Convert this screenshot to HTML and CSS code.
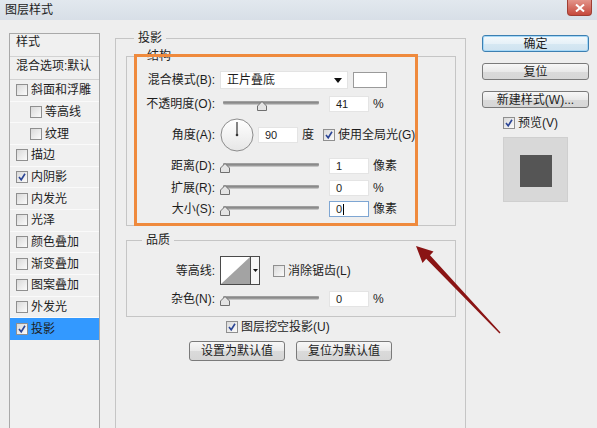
FILE: index.html
```html
<!DOCTYPE html>
<html lang="zh-CN">
<head>
<meta charset="utf-8">
<title>图层样式</title>
<link rel="stylesheet" href="styles.css">
</head>
<body>
<div class="titlebar">
  <span class="title">图层样式</span>
  <span class="close"><svg width="10" height="8" viewBox="0 0 10 8"><path d="M1 0.5 L9 7.5 M9 0.5 L1 7.5" stroke="#fff" stroke-width="2"/></svg></span>
</div>
<div class="main">
  <div class="list">
    <div class="list-head">样式</div>
    <div class="list-blend">混合选项:默认</div>
    <div class="item"><span class="cb"></span><span class="itxt">斜面和浮雕</span></div>
    <div class="item sub"><span class="cb"></span><span class="itxt">等高线</span></div>
    <div class="item sub"><span class="cb"></span><span class="itxt">纹理</span></div>
    <div class="item"><span class="cb"></span><span class="itxt">描边</span></div>
    <div class="item"><span class="cb"><svg class="tick" viewBox="0 0 10 10"><path d="M2 5 L4.2 7.8 L8 1.8" /></svg></span><span class="itxt">内阴影</span></div>
    <div class="item"><span class="cb"></span><span class="itxt">内发光</span></div>
    <div class="item"><span class="cb"></span><span class="itxt">光泽</span></div>
    <div class="item"><span class="cb"></span><span class="itxt">颜色叠加</span></div>
    <div class="item"><span class="cb"></span><span class="itxt">渐变叠加</span></div>
    <div class="item"><span class="cb"></span><span class="itxt">图案叠加</span></div>
    <div class="item"><span class="cb"></span><span class="itxt">外发光</span></div>
    <div class="item selected"><span class="cb"><svg class="tick" viewBox="0 0 10 10"><path d="M2 5 L4.2 7.8 L8 1.8" /></svg></span><span class="itxt">投影</span></div>
  </div>

  <fieldset class="fs-outer">
    <legend class="lg-outer">投影</legend>
    <fieldset class="fs-struct">
      <legend class="lg-struct">结构</legend>
      <div class="row r1">
        <span class="lbl">混合模式(B):</span>
        <span class="select"><span class="sel-text">正片叠底</span><svg class="sel-arrow" width="8" height="5" viewBox="0 0 8 5"><path d="M0 0 H8 L4 5 Z" fill="#111"/></svg></span>
        <span class="swatch"></span>
      </div>
      <div class="row r2">
        <span class="lbl">不透明度(O):</span>
        <svg class="slider" width="100" height="12" viewBox="0 0 100 12"><rect x="3" y="1.5" width="96" height="3" rx="1.5" fill="#9a9a9a"/><rect x="3" y="1.5" width="96" height="1" fill="#7a7a7a"/><path d="M37.5 10.5 V6 L42 1.5 L46.5 6 V10.5 Z" fill="#e4e4e4" stroke="#6f6f6f"/></svg>
        <span class="num">41</span>
        <span class="unit">%</span>
      </div>
      <div class="row r3">
        <span class="lbl">角度(A):</span>
        <svg class="dial" width="34" height="34" viewBox="0 0 34 34"><defs><linearGradient id="dg" x1="0" y1="0" x2="0" y2="1"><stop offset="0" stop-color="#ffffff"/><stop offset="1" stop-color="#e6e6e6"/></linearGradient></defs><circle cx="17" cy="17" r="16" fill="url(#dg)" stroke="#8c8c8c"/><path d="M17 17 V4" stroke="#333" stroke-width="1.2"/><circle cx="17" cy="17" r="1.3" fill="#333"/></svg>
        <span class="num num-dial">90</span>
        <span class="unit">度</span>
        <span class="cb cb-global"><svg class="tick" viewBox="0 0 10 10"><path d="M2 5 L4.2 7.8 L8 1.8" /></svg></span>
        <span class="cbtxt">使用全局光(G)</span>
      </div>
      <div class="row r4">
        <span class="lbl">距离(D):</span>
        <svg class="slider" width="100" height="12" viewBox="0 0 100 12"><rect x="3" y="1.5" width="96" height="3" rx="1.5" fill="#9a9a9a"/><rect x="3" y="1.5" width="96" height="1" fill="#7a7a7a"/><path d="M0.5 10.5 V6 L5 1.5 L9.5 6 V10.5 Z" fill="#e4e4e4" stroke="#6f6f6f"/></svg>
        <span class="num">1</span>
        <span class="unit">像素</span>
      </div>
      <div class="row r5">
        <span class="lbl">扩展(R):</span>
        <svg class="slider" width="100" height="12" viewBox="0 0 100 12"><rect x="3" y="1.5" width="96" height="3" rx="1.5" fill="#9a9a9a"/><rect x="3" y="1.5" width="96" height="1" fill="#7a7a7a"/><path d="M0.5 10.5 V6 L5 1.5 L9.5 6 V10.5 Z" fill="#e4e4e4" stroke="#6f6f6f"/></svg>
        <span class="num">0</span>
        <span class="unit">%</span>
      </div>
      <div class="row r6">
        <span class="lbl">大小(S):</span>
        <svg class="slider" width="100" height="12" viewBox="0 0 100 12"><rect x="3" y="1.5" width="96" height="3" rx="1.5" fill="#9a9a9a"/><rect x="3" y="1.5" width="96" height="1" fill="#7a7a7a"/><path d="M0.5 10.5 V6 L5 1.5 L9.5 6 V10.5 Z" fill="#e4e4e4" stroke="#6f6f6f"/></svg>
        <span class="num focus">0<span class="caret"></span></span>
        <span class="unit">像素</span>
      </div>
    </fieldset>

    <fieldset class="fs-quality">
      <legend class="lg-quality">品质</legend>
      <div class="row q1">
        <span class="lbl">等高线:</span>
        <span class="contour">
          <svg class="contour-img" width="29" height="27" viewBox="0 0 29 27"><rect width="29" height="27" fill="#fff"/><path d="M0 27 L29 0 V27 Z" fill="#a3a3a3"/></svg>
          <span class="contour-drop"><svg width="5" height="3" viewBox="0 0 5 3"><path d="M0 0 H5 L2.5 3 Z" fill="#111"/></svg></span>
        </span>
        <span class="cb cb-aa"></span>
        <span class="cbtxt">消除锯齿(L)</span>
      </div>
      <div class="row q2">
        <span class="lbl">杂色(N):</span>
        <svg class="slider" width="100" height="12" viewBox="0 0 100 12"><rect x="3" y="1.5" width="96" height="3" rx="1.5" fill="#9a9a9a"/><rect x="3" y="1.5" width="96" height="1" fill="#7a7a7a"/><path d="M0.5 10.5 V6 L5 1.5 L9.5 6 V10.5 Z" fill="#e4e4e4" stroke="#6f6f6f"/></svg>
        <span class="num">0</span>
        <span class="unit">%</span>
      </div>
    </fieldset>

    <div class="knock">
      <span class="cb"><svg class="tick" viewBox="0 0 10 10"><path d="M2 5 L4.2 7.8 L8 1.8" /></svg></span>
      <span class="cbtxt">图层挖空投影(U)</span>
    </div>
    <div class="defaults">
      <span class="btn btn-def">设置为默认值</span>
      <span class="btn btn-def">复位为默认值</span>
    </div>
  </fieldset>

  <div class="side">
    <div class="side-btns">
      <span class="btn btn-side primary">确定</span>
      <span class="btn btn-side">复位</span>
      <span class="btn btn-side">新建样式(W)...</span>
    </div>
    <div class="preview-toggle">
      <span class="cb"><svg class="tick" viewBox="0 0 10 10"><path d="M2 5 L4.2 7.8 L8 1.8" /></svg></span>
      <span class="cbtxt">预览(V)</span>
    </div>
    <div class="preview-box"><div class="preview-square"></div></div>
  </div>
</div>

<div class="highlight"></div>
<svg class="arrow" width="597" height="428" viewBox="0 0 597 428">
  <path d="M416 246 L433.5 251.5 L430 255.2 L500.5 332.6 L499.5 333.4 L426.2 258.8 L422.5 263 Z" fill="#8a1414"/>
</svg>
</body>
</html>
```

FILE: styles.css
```css
* { box-sizing: border-box; }

body {
  margin: 0;
  width: 597px;
  height: 428px;
  overflow: hidden;
  position: relative;
  background: #eeeeee;
  font-family: "Liberation Sans", "Noto Sans CJK SC", sans-serif;
  font-size: 12px;
  line-height: 14px;
  color: #1d1d1d;
}

/* title bar */
.titlebar {
  height: 20px;
  display: flex;
  justify-content: space-between;
  align-items: center;
  padding-left: 5px;
  background: linear-gradient(#e2e8ee, #d8dfe7);
}
.title { color: #222; }
.close {
  align-self: flex-start;
  width: 25px;
  height: 16px;
  margin-right: 5px;
  display: flex;
  align-items: center;
  justify-content: center;
  background: linear-gradient(#e3948a, #c6493c);
  border: 1px solid #9f3e33;
  border-top: none;
  border-radius: 0 0 4px 4px;
}

.main {
  display: flex;
  align-items: flex-start;
  padding-top: 13px;
}

/* left styles list */
.list {
  margin-left: 9px;
  width: 91px;
  height: 395px;
  border: 1px solid #a9a9a9;
  border-bottom: none;
  background: #f0f0f0;
  flex-shrink: 0;
}
.list-head {
  height: 23px;
  padding: 1px 0 0 6px;
  border-bottom: 1px solid #d2d2d2;
}
.list-blend {
  height: 23px;
  padding: 2px 0 0 6px;
  border-bottom: 1px solid #d2d2d2;
  white-space: nowrap;
}
.item {
  height: 21.67px;
  display: flex;
  align-items: center;
  padding-left: 6px;
  border-bottom: 1px solid #fafafa;
}
.item.sub { padding-left: 20px; }
.item.selected {
  background: #3399ff;
  border-bottom-color: #3399ff;
}
.itxt { margin-left: 3px; }

/* checkbox */
.cb {
  width: 12px;
  height: 12px;
  flex-shrink: 0;
  border: 1px solid #8f8f8f;
  background: linear-gradient(135deg, #d9d9d9, #fbfbfb);
  display: inline-flex;
  align-items: center;
  justify-content: center;
}
.tick { width: 10px; height: 10px; }
.tick path { fill: none; stroke: #2b4596; stroke-width: 1.6; }
.cbtxt { margin-left: 3px; white-space: nowrap; }

/* fieldsets */
fieldset {
  min-width: 0;
  margin: 0;
  padding: 0;
  border: 1px solid #c5c5c5;
}
legend {
  padding: 0 4px;
  line-height: 14px;
  font-size: 12px;
}
.fs-outer {
  margin: -2px 0 0 15px;
  width: 351px;
  height: 397px;
  border-bottom: none;
  flex-shrink: 0;
}
.lg-outer { margin-left: 18px; }

.fs-struct {
  margin: 4px 0 0 10px;
  width: 330px;
  padding: 6px 0 5px 0;
  border-bottom: 1px solid #c5c5c5;
}
.lg-struct { margin-left: 16px; }

.fs-quality {
  margin: 7px 0 0 10px;
  width: 330px;
  padding: 8px 0 4px 0;
  border-bottom: 1px solid #c5c5c5;
}
.lg-quality { margin-left: 15px; }

/* rows */
.row {
  display: flex;
  align-items: center;
  white-space: nowrap;
}
.r1 { height: 22px; }
.r2 { height: 25px; }
.r3 { height: 38px; }
.r4 { height: 23px; }
.r5 { height: 21px; }
.r6 { height: 22px; }
.q1 { height: 31px; }
.q2 { height: 26px; }

.lbl {
  width: 88px;
  margin-right: 5px;
  text-align: right;
  flex-shrink: 0;
}

.select {
  width: 128px;
  height: 18px;
  display: flex;
  align-items: center;
  justify-content: space-between;
  padding-left: 6px;
  background: #ffffff;
  border: 1px solid #e3e3e3;
}
.sel-arrow { margin-right: 5px; }
.swatch {
  width: 34px;
  height: 16px;
  margin-left: 5px;
  background: #ffffff;
  border: 1px solid #9a9a9a;
}

.slider { flex-shrink: 0; margin-top: 4px; }

.num {
  width: 40px;
  height: 16px;
  margin-left: 9px;
  padding-left: 6px;
  display: flex;
  align-items: center;
  background: #ffffff;
  border: 1px solid #e4e4e4;
  font-family: "Liberation Sans", sans-serif;
  font-size: 11px;
}
.num.focus { border-color: #7ea6d3; }
.caret {
  width: 1px;
  height: 11px;
  margin-left: 1px;
  background: #000;
}
.unit { margin-left: 4px; }

.dial { flex-shrink: 0; }
.num-dial { margin-left: 4px; }
.cb-global { margin-left: 9px; }

.contour {
  width: 40px;
  height: 29px;
  display: flex;
  border: 1px solid #4a4a4a;
  background: #fff;
}
.contour-img { display: block; }
.contour-drop {
  width: 9px;
  display: flex;
  align-items: center;
  justify-content: center;
  border-left: 1px solid #4a4a4a;
  background: #f6f6f6;
}
.cb-aa { margin-left: 13px; }

.knock {
  margin-top: 2px;
  height: 16px;
  padding-left: 110px;
  display: flex;
  align-items: center;
}

.btn {
  display: flex;
  align-items: center;
  justify-content: center;
  border: 1px solid #7a7a7a;
  border-radius: 3px;
  background: linear-gradient(#f7f7f7, #e9e9e9 50%, #dadada 51%, #d6d6d6);
  white-space: nowrap;
}
.defaults {
  margin-top: 6px;
  padding-left: 73px;
  display: flex;
  gap: 11px;
}
.btn-def { width: 96px; height: 20px; }

/* right side */
.side {
  margin: 2px 0 0 16px;
  width: 107px;
  flex-shrink: 0;
}
.side-btns {
  display: flex;
  flex-direction: column;
  gap: 11px;
}
.btn-side { height: 17px; }
.primary {
  border-color: #3c7fb1;
  box-shadow: inset 0 0 0 1px #a6d8f7;
  background: linear-gradient(#f4f9fc, #e6f1f8 50%, #d6e8f3 51%, #cfe3f0);
}
.preview-toggle {
  margin-top: 8px;
  height: 14px;
  padding-left: 21px;
  display: flex;
  align-items: center;
}
.preview-box {
  margin: 7px 0 0 21px;
  width: 65px;
  height: 65px;
  padding: 17px 0 0 16px;
  background: #d8d8d8;
  border: 1px solid #cfcfcf;
}
.preview-square {
  width: 32px;
  height: 32px;
  background: #555555;
}

/* annotation overlays */
.highlight {
  position: absolute;
  left: 134px;
  top: 54px;
  width: 284px;
  height: 172px;
  border: 3px solid #ef8a3d;
  pointer-events: none;
}
.arrow {
  position: absolute;
  left: 0;
  top: 0;
  pointer-events: none;
}
```
